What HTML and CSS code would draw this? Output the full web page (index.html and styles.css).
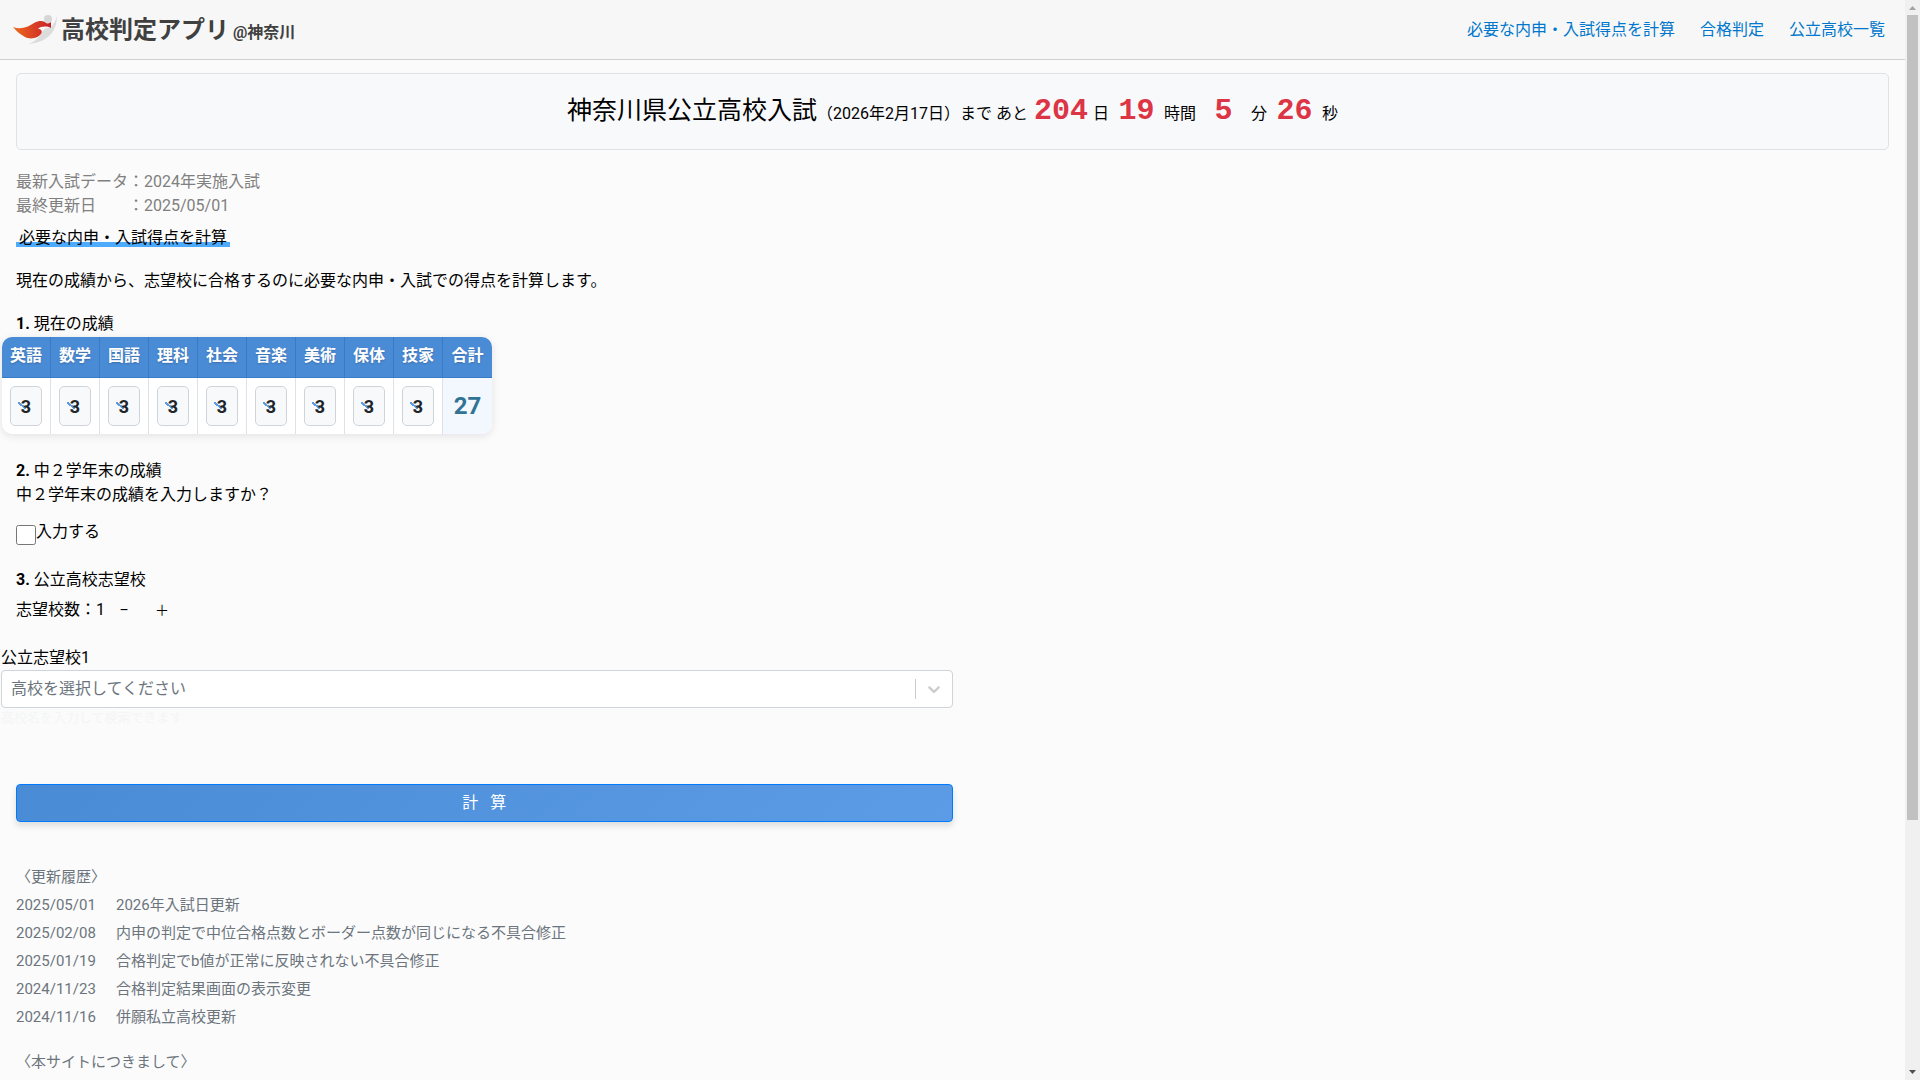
FILE: index.html
```
<!DOCTYPE html>
<html lang="ja">
<head>
  <meta charset="UTF-8">
  <meta name="viewport" content="width=device-width, initial-scale=1">
  <title>高校判定アプリ@神奈川</title>
  <link rel="stylesheet" href="styles.css">
</head>
<body>
  <header class="site-header">
    <a class="logo" href="#">
      <svg class="logo-mark" viewBox="0 0 46 32" width="46" height="32" aria-hidden="true">
        <defs>
          <linearGradient id="cape" x1="0" x2="1">
            <stop offset="0" stop-color="#ee6a1c"/>
            <stop offset="1" stop-color="#c8202c"/>
          </linearGradient>
        </defs>
        <path d="M45 2C45 17 36 28 17 30C24 27 28 22 31 17C33 13 37 15 39 13C42 10 44 6 45 2Z" fill="#dcdcdc"/>
        <circle cx="36" cy="5" r="4" fill="#d6d6d6"/>
        <path d="M1 13C9 16 16 13 22 9C28 6 32 7 34 9C36 10 38 9 39 8L39 14C35 12 29 12 26 15C29 15 31 17 29 20C26 24 19 26 13 23C8 20 4 17 1 13Z" fill="url(#cape)"/>
      </svg>
      <span class="logo-name">高校判定アプリ</span>
      <span class="logo-area">@神奈川</span>
    </a>
    <nav class="site-nav">
      <a href="#">必要な内申・入試得点を計算</a>
      <a href="#">合格判定</a>
      <a href="#">公立高校一覧</a>
    </nav>
  </header>

  <main>
    <div class="countdown">
      <span class="exam-name">神奈川県公立高校入試</span>（2026年2月17日）まで あと
      <span class="num days">204</span>日<span class="num">19</span>時間<span class="num">5</span>分<span class="num">26</span>秒
    </div>

    <p class="data-info">最新入試データ：2024年実施入試<br>最終更新日　　：2025/05/01</p>
    <h1 class="page-title"><span>必要な内申・入試得点を計算</span></h1>
    <p class="lead">現在の成績から、志望校に合格するのに必要な内申・入試での得点を計算します。</p>

    <form class="calc-form">
      <h2 class="step"><b>1.</b> 現在の成績</h2>
      <table class="grades">
        <thead>
          <tr><th>英語</th><th>数学</th><th>国語</th><th>理科</th><th>社会</th><th>音楽</th><th>美術</th><th>保体</th><th>技家</th><th>合計</th></tr>
        </thead>
        <tbody>
          <tr>
            <td><select class="grade" aria-label="英語"><option>3</option></select></td>
            <td><select class="grade" aria-label="数学"><option>3</option></select></td>
            <td><select class="grade" aria-label="国語"><option>3</option></select></td>
            <td><select class="grade" aria-label="理科"><option>3</option></select></td>
            <td><select class="grade" aria-label="社会"><option>3</option></select></td>
            <td><select class="grade" aria-label="音楽"><option>3</option></select></td>
            <td><select class="grade" aria-label="美術"><option>3</option></select></td>
            <td><select class="grade" aria-label="保体"><option>3</option></select></td>
            <td><select class="grade" aria-label="技家"><option>3</option></select></td>
            <td class="total">27</td>
          </tr>
        </tbody>
      </table>

      <h2 class="step"><b>2.</b> 中２学年末の成績</h2>
      <p class="question">中２学年末の成績を入力しますか？</p>
      <div class="check">
        <input type="checkbox" id="second-year">
        <label for="second-year">入力する</label>
      </div>

      <h2 class="step"><b>3.</b> 公立高校志望校</h2>
      <div class="school-count">
        <span>志望校数：1</span>
        <button type="button" aria-label="減らす">–</button>
        <button type="button" aria-label="増やす">＋</button>
      </div>

      <div class="school">
        <label for="school1">公立志望校1</label>
        <div class="school-select">
          <select id="school1"><option>高校を選択してください</option></select>
          <span class="indicator">
            <svg viewBox="0 0 20 20" width="20" height="20" aria-hidden="true">
              <path fill="#ccc" d="M4.516 7.548c0.436-0.446 1.043-0.481 1.576 0l3.908 3.747 3.908-3.747c0.533-0.481 1.141-0.446 1.574 0 0.436 0.445 0.408 1.197 0 1.615-0.406 0.418-4.695 4.502-4.695 4.502-0.217 0.223-0.502 0.335-0.787 0.335s-0.57-0.112-0.789-0.335c0 0-4.287-4.084-4.695-4.502s-0.436-1.17 0-1.615z"/>
            </svg>
          </span>
        </div>
        <small class="hint">高校名を入力して検索できます</small>
      </div>

      <button type="submit" class="submit">計&nbsp;&nbsp;&nbsp;算</button>
    </form>

    <section class="notes">
      <h3>〈更新履歴〉</h3>
      <dl class="history">
        <dt>2025/05/01</dt><dd>2026年入試日更新</dd>
        <dt>2025/02/08</dt><dd>内申の判定で中位合格点数とボーダー点数が同じになる不具合修正</dd>
        <dt>2025/01/19</dt><dd>合格判定でb値が正常に反映されない不具合修正</dd>
        <dt>2024/11/23</dt><dd>合格判定結果画面の表示変更</dd>
        <dt>2024/11/16</dt><dd>併願私立高校更新</dd>
      </dl>
      <h3>〈本サイトにつきまして〉</h3>
      <p>・掲載の入試データについて</p>
    </section>
  </main>

  <div class="scrollbar" aria-hidden="true">
    <svg viewBox="0 0 15 15" width="15" height="15"><path d="M4 10L7.500 6L11 10Z" fill="#a3a3a3"/></svg>
    <div class="thumb"></div>
    <svg viewBox="0 0 15 15" width="15" height="15"><path d="M4 5L7.500 9L11 5Z" fill="#505050"/></svg>
  </div>
</body>
</html>
```
FILE: styles.css
```
* {
  box-sizing: border-box;
}
body {
  margin: 0;
  padding-right: 15px;
  background: #fbfbfb;
  color: #000;
  font-family: Roboto, "Noto Sans CJK JP", sans-serif;
  font-size: 16px;
  line-height: 24px;
}
h1, h2, h3, p, dl, dd {
  margin: 0;
  font-size: inherit;
  font-weight: 400;
}

/* header */
.site-header {
  display: flex;
  justify-content: space-between;
  align-items: center;
  height: 60px;
  padding: 0 20px 0 12px;
  background: #f7f7f7;
  border-bottom: 1px solid #d0d0d2;
}
.logo {
  display: flex;
  align-items: center;
  color: #404040;
  text-decoration: none;
  font-weight: 700;
}
.logo-name {
  margin-left: 3px;
  font-size: 24px;
}
.logo-area {
  margin: 6px 0 0 4px;
  font-size: 16px;
}
.site-nav {
  display: flex;
  gap: 25px;
}
.site-nav a {
  color: #0077cc;
  text-decoration: none;
}

/* countdown */
.countdown {
  margin: 13px 16px 20px;
  padding: 15px 16px 13px;
  border: 1px solid #dee2e6;
  border-radius: 5px;
  background: #f8f9fb;
  text-align: center;
  line-height: 44px;
}
.exam-name {
  font-size: 25px;
}
.num {
  display: inline-block;
  min-width: 55px;
  color: #dc3545;
  font-family: "Liberation Mono", monospace;
  font-size: 30px;
  font-weight: 700;
}
.days {
  padding: 0 5px 0 2px;
}

.data-info {
  margin: 0 16px 8px;
  color: #808080;
}
.page-title {
  margin: 0 16px 19px;
}
.page-title span {
  padding: 0 3px;
  background: linear-gradient(transparent 75%, #4dabff 75%);
}
.lead {
  margin: 0 16px 19px;
}

/* form */
.calc-form {
  width: 50%;
}
.step, .question {
  margin-left: 16px;
}
.grades {
  margin: 1px 0 25px 2px;
  border-collapse: separate;
  border-spacing: 0;
  border-radius: 10px;
  overflow: hidden;
  background: #fff;
  box-shadow: 0 2px 8px rgba(0, 0, 0, 0.1);
}
.grades th {
  width: 49px;
  height: 41px;
  padding: 0 0 2px;
  background: #4a8bd6;
  border-right: 1px solid #3a7bc8;
  border-bottom: 1px solid #3a7bc8;
  color: #fff;
  font-weight: 700;
  text-align: center;
  text-shadow: 0 1px 2px rgba(0, 0, 0, 0.2);
}
.grades td {
  height: 56px;
  padding: 0;
  border-right: 1px solid #dee2e6;
  text-align: center;
}
.grades th:last-child, .grades td:last-child {
  border-right: 0;
}
.grade {
  display: block;
  width: 32px;
  height: 40px;
  margin: 0 auto;
  padding: 0;
  appearance: none;
  border: 1px solid #ced4da;
  border-radius: 5px;
  background: #f8f9fb linear-gradient(40deg, transparent 40%, #5c9ce6 40%, #5c9ce6 60%, transparent 60%) 7px 15px / 8px 7px no-repeat;
  color: #212529;
  font: 700 18px Roboto, sans-serif;
  text-align: center;
  text-align-last: center;
}
.grades .total {
  background: #f3f7fe;
  color: #317393;
  font-size: 24px;
  font-weight: 700;
}
.check {
  display: flex;
  margin: 13px 16px 23px;
}
.check input {
  width: 20px;
  height: 20px;
  margin: 5px 0 0;
}
.school-count {
  display: flex;
  margin: 6px 16px 24px;
}
.school-count button {
  width: 38px;
  padding: 0;
  border: 0;
  background: none;
  color: #000;
  font: inherit;
  font-size: 14px;
}
.school {
  display: flex;
  flex-direction: column;
  padding-left: 1px;
}
.school-select {
  display: grid;
}
.school-select select {
  grid-area: 1 / 1;
  height: 38px;
  padding: 0 9px;
  appearance: none;
  border: 1px solid #ced4da;
  border-radius: 4px;
  background: #fff;
  color: #6c757d;
  font: inherit;
}
.indicator {
  grid-area: 1 / 1;
  justify-self: end;
  align-self: center;
  display: flex;
  align-items: center;
  height: 20px;
  margin-right: 1px;
  padding: 0 8px;
  border-left: 1px solid #ccc;
  pointer-events: none;
}
.hint {
  color: #f4f5f6;
  font-size: 13px;
  line-height: 20px;
}
.submit {
  display: block;
  width: calc(100% - 16px);
  height: 38px;
  margin: 56px 0 0 16px;
  border: 1px solid #007bff;
  border-radius: 4px;
  background: linear-gradient(135deg, #4a8bd6, #5c9ce6);
  box-shadow: 0 4px 6px rgba(0, 0, 0, 0.12);
  color: #fff;
  font: inherit;
}

/* notes */
.notes {
  padding: 41px 16px 320px;
  color: #6c757d;
  font-size: 15px;
  line-height: 28px;
}
.history {
  display: grid;
  grid-template-columns: 100px 1fr;
  margin-bottom: 17px;
}

/* scrollbar */
.scrollbar {
  position: fixed;
  top: 0;
  right: 0;
  bottom: 0;
  display: flex;
  flex-direction: column;
  width: 15px;
  background: #f0f0f0;
}
.scrollbar svg:last-child {
  margin-top: auto;
}
.thumb {
  height: 74.5%;
  margin: 0 2px;
  background: #c1c1c1;
}
```
